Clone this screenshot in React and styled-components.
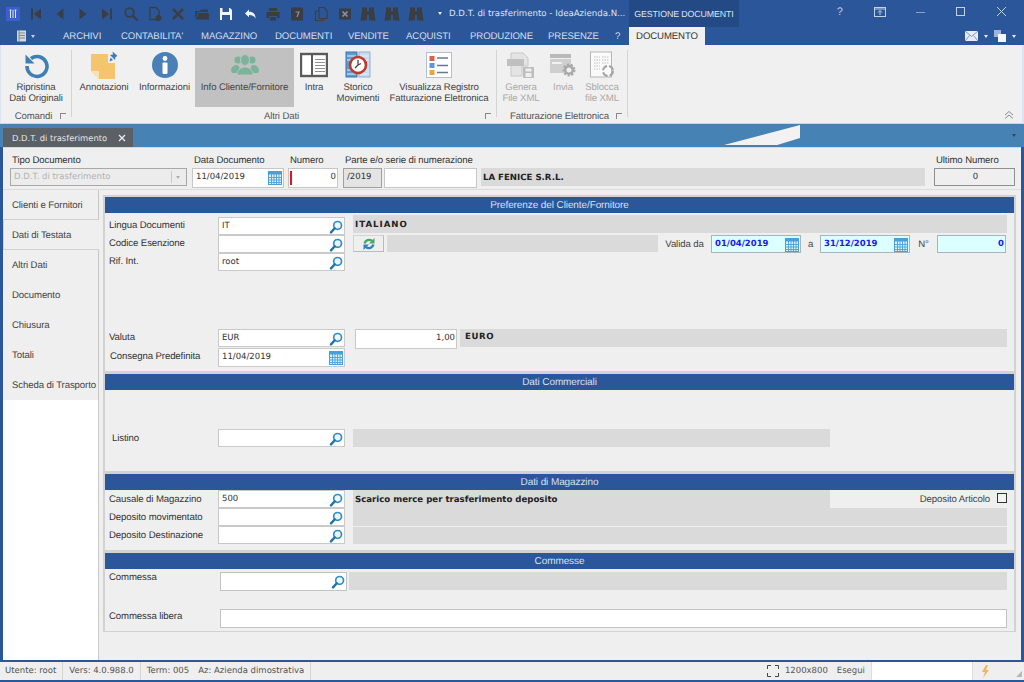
import React from "react";
import styled, { createGlobalStyle } from "styled-components";

const Global = createGlobalStyle`
  html, body { margin: 0; padding: 0; background: #2b579a; }
  * { box-sizing: border-box; }
`;
const SANS = `"Liberation Sans", Arial, sans-serif`;
const WIDE = `"DejaVu Sans", Verdana, sans-serif`;

const Window = styled.div`
  position: relative; width: 1024px; height: 682px; overflow: hidden; background: #2b579a;
  display: flex; flex-direction: column; font-family: ${SANS}; font-size: 9.6px; color: #333;
  text-rendering: geometricPrecision; letter-spacing: -0.1px;
`;
const TitleBar = styled.div`height: 27px; display: flex; align-items: stretch; flex: none;`;
const AppLogo = styled.div`
  width: 14px; height: 14px; margin: 7px 4px 0 6px; background: #3c5fd0; display: flex; align-items: center; justify-content: center; flex: none;
`;
const Quick = styled.div`display: flex; width: 413px; flex: none; align-items: center;`;
const QuickBtn = styled.div`width: 23.75px; display: flex; justify-content: center; flex: none;`;
const Title = styled.div`
  flex: none; width: 192px; display: flex; align-items: center; gap: 7px; color: #dfe6f2; font-family: ${WIDE}; font-size: 8.6px; white-space: nowrap; padding-left: 1px; letter-spacing: 0;
`;
const Caret = styled.span`
  display: block; width: 0; height: 0; border-left: 2.5px solid transparent; border-right: 2.5px solid transparent;
  border-top: 3px solid ${p => p.$c || "#e8edf5"};
`;
const ContextTab = styled.div`
  width: 110px; flex: none; background: #234a84; color: #dfe6f2; display: flex; align-items: center; justify-content: center; white-space: nowrap; font-size: 8.8px;
`;
const Controls = styled.div`flex: 1; display: flex; align-items: center; justify-content: flex-end; padding: 0 2px 4px 0;`;
const Ctl = styled.div`width: 40.5px; display: flex; justify-content: center; color: #c4d0e4; font-size: 11px;`;

const MenuBar = styled.div`height: 18px; display: flex; align-items: stretch; flex: none; color: #d5deec; position: relative;`;
const MenuIcon = styled.div`width: 63px; display: flex; align-items: center; gap: 3px; padding-left: 16px; flex: none;`;
const MenuItem = styled.div`width: ${p => p.$w}px; line-height: 20px; white-space: nowrap; flex: none;`;
const MenuActive = styled.div`
  width: 76px; background: #f0f0f0; color: #333; text-align: center; line-height: 20px; flex: none;
`;
const MenuRight = styled.div`flex: 1; display: flex; align-items: center; justify-content: flex-end; gap: 6px; padding-right: 8px;`;

const Ribbon = styled.div`
  height: 79px; flex: none; background: #f0f0f0; display: flex; border-left: 1px solid #dce4ef; border-right: 2px solid #dce4ef; border-bottom: 1px solid #c7d6e6; position: relative;
`;
const Group = styled.div`
  width: ${p => p.$w}px; flex: none; display: flex; flex-direction: column; position: relative; padding-top: 3px;
  &::after { content: ""; position: absolute; right: 0; top: 5px; bottom: 6px; width: 1px; background: #d4d4d4; }
`;
const GroupBtns = styled.div`display: flex; height: 59px; padding-left: ${p => p.$pad || 0}px;`;
const GroupLabel = styled.div`
  text-align: center; line-height: 13px; margin-top: 3px; color: #555; position: relative; padding-right: 6px; white-space: nowrap;
`;
const Launcher = styled.span`
  position: absolute; right: 6px; top: 3px; width: 6px; height: 6px; border-left: 1px solid #888; border-top: 1px solid #888;
`;
const RibBtn = styled.div`
  width: ${p => p.$w}px; margin-right: ${p => p.$mr || 0}px; flex: none; display: flex; flex-direction: column; align-items: center;
  background: ${p => (p.$on ? "#c1c1c1" : "transparent")}; color: ${p => (p.$off ? "#a9a9a9" : "#444")};
`;
const RibIcon = styled.div`height: 31px; display: flex; align-items: center; justify-content: center; margin-top: 1px; flex: none;`;
const RibText = styled.div`text-align: center; line-height: 11px; white-space: pre; margin-top: 2px;`;
const Collapse = styled.div`position: absolute; right: 8px; bottom: 3px; color: #777;`;

const TabBand = styled.div`height: 23px; flex: none; background: #4682b4; position: relative; display: flex; align-items: flex-end; padding-left: 3px;`;
const DocTab = styled.div`
  width: 130px; height: 19px; background: #5b6066; color: #e6e6e6; display: flex; align-items: center; justify-content: space-between; padding: 0 7px 0 9px; font-family: ${WIDE}; font-size: 8.4px; letter-spacing: 0;
`;
const Wedge = styled.div`
  position: absolute; left: 724px; top: 1px; width: 76px; height: 20px; background: #f2f2f2;
  clip-path: polygon(0 100%, 100% 0, 100% 65%, 70% 100%);
`;
const BandCaret = styled.div`position: absolute; right: 8px; top: 10px;`;

const Frame = styled.div`
  flex: 1; min-height: 0; margin: 0 3px; background: #efefef; display: flex; flex-direction: column; border-top: 1px solid #d8d8d8;
`;
const Header = styled.div`
  height: 42px; flex: none; display: flex; align-items: flex-start; padding: 7px 0 0 7px; border-bottom: 1px solid #dcdcdc;
`;
const HField = styled.div`
  width: ${p => p.$w}px; margin-right: ${p => p.$mr || 0}px; flex: none; display: flex; flex-direction: column;
`;
const HLabel = styled.div`height: 13px; line-height: 12px; padding-left: 2px; color: #333; white-space: nowrap;`;
const HPair = styled.div`display: flex; gap: 2px;`;
const Box = styled.div`
  height: ${p => p.$h || 20}px; background: ${p => p.$bg || "#fff"}; border: 1px solid ${p => p.$bc || "#c6c6c6"};
  width: ${p => (p.$w ? p.$w + "px" : "auto")}; flex: ${p => (p.$w ? "none" : "1 1 auto")};
  display: flex; align-items: flex-start; position: relative; font-family: ${WIDE}; font-size: 8.5px; color: ${p => p.$fg || "#333"}; letter-spacing: 0;
  padding: 3px 1px 0 3px; white-space: nowrap;
  justify-content: ${p => (p.$right ? "flex-end" : "space-between")};
  margin-right: ${p => p.$mr || 0}px; margin-left: ${p => p.$ml || 0}px;
  & > svg { margin-top: -1px; }
`;
const SelectArrow = styled.div`
  position: absolute; right: 3px; top: 2px; bottom: 2px; width: 12px; border-left: 1px solid #c8c8c8; display: flex; align-items: center; justify-content: center;
`;
const RedMark = styled.span`position: absolute; left: 1px; top: 2px; bottom: 2px; width: 2px; background: #e1141c;`;
const Gray = styled.div`
  width: ${p => (p.$w ? p.$w + "px" : "auto")}; flex: ${p => (p.$w ? "none" : "1 1 auto")}; height: ${p => p.$h || 18}px; background: #dadada;
  margin-top: ${p => p.$mt || 0}px; margin-right: ${p => p.$mr || 0}px; margin-left: ${p => p.$ml || 0}px;
  padding: ${p => p.$pt ?? 4}px 2px 0 ${p => p.$pl ?? 2}px;
  font-family: ${WIDE}; font-size: 8.6px; font-weight: 700; color: #222; white-space: nowrap; line-height: 12px; letter-spacing: ${p => p.$ls || 0}px;
`;

const Content = styled.div`flex: 1; min-height: 0; display: flex;`;
const Sidebar = styled.div`width: 96px; flex: none; background: #fff; border-right: 1px solid #c8c8c8; display: flex; flex-direction: column;`;
const SideTab = styled.div`
  height: 30px; flex: none; background: #efefef; padding: 2px 0 0 8px; display: flex; align-items: center; color: #444; white-space: nowrap; margin-right: ${p => (p.$on ? -1 : 0)}px;
  border-left: 1px solid ${p => (p.$on ? "#d0d0d0" : "#efefef")}; z-index: ${p => (p.$on ? 1 : 0)};
  border-bottom: 1px solid ${p => (p.$on || p.$above ? "#d0d0d0" : "#efefef")};
`;
const Main = styled.div`flex: 1; min-width: 0; padding: 5px 5px 0 4px; display: flex; flex-direction: column;`;
const Section = styled.section`
  height: ${p => p.$h}px; flex: none; border: 2px solid #d2d2d2; border-bottom-width: 1px; display: flex; flex-direction: column;
`;
const SectionHead = styled.div`
  height: 16px; flex: none; background: #2b579a; color: #d7e0ee; text-align: center; line-height: 17px; font-size: 10px;
`;
const SectionBody = styled.div`padding: ${p => p.$top || 0}px 7px 0 4px; display: flex; flex-direction: column;`;
const Row = styled.div`display: flex; align-items: flex-start; height: ${p => p.$h || 18}px; margin-top: ${p => p.$mt || 0}px; flex: none;`;
const Label = styled.div`
  width: ${p => p.$w || 109}px; flex: none; padding-left: ${p => p.$in || 0}px; line-height: 12px; padding-top: ${p => p.$pt ?? 3}px; color: #333; white-space: nowrap;
`;
const InlineLabel = styled.div`
  width: ${p => p.$w}px; flex: none; line-height: 12px; padding-top: 4px; color: #444; white-space: nowrap; text-align: ${p => p.$align || "left"};
`;
const RefreshBtn = styled.div`
  width: 31px; height: 17px; flex: none; margin: 0 3px 0 8px; background: #efefef; border: 1px solid #d4d4d4; border-right-color: #bbb; border-bottom-color: #bbb; display: flex; align-items: center; justify-content: center;
`;
const Check = styled.div`width: 10px; height: 10px; flex: none; border: 1px solid #333; background: #f4f4f4; margin: 3px 0 0 7px;`;

const StatusBar = styled.div`
  height: 18px; flex: none; margin: 2px 0 2px 0; background: #efefef; display: flex; align-items: stretch; color: #555; font-family: ${WIDE}; font-size: 8.5px; letter-spacing: 0;
`;
const Cell = styled.div`
  padding: 0 ${p => p.$pr ?? 6}px 0 ${p => p.$pl ?? 6}px; display: flex; align-items: center; white-space: nowrap; gap: 9px; flex: none;
  border-right: ${p => (p.$plain ? "0" : "1px solid #d5d5d5")};
`;
const Spring = styled.div`flex: 1;`;
const StatusInput = styled.div`width: 101px; flex: none; background: #fff; margin-left: 3px; border-left: 1px solid #ddd;`;
const Bolt = styled.div`width: 52px; flex: none; display: flex; align-items: center; padding-left: 8px; position: relative; border-left: 1px solid #ddd;`;
const Grip = styled.div`
  position: absolute; right: 2px; bottom: 3px; width: 6px; height: 6px;
  background: radial-gradient(circle, #777 0.6px, transparent 0.8px) 0 0 / 2px 2px;
  clip-path: polygon(100% 0, 100% 100%, 0 100%);
`;

const dk = "#3a3d44";
const I = ({ s = 16, w, h, children, vb }) => (
  <svg width={w || s} height={h || s} viewBox={vb || `0 0 ${s} ${s}`} style={{ display: "block", flex: "none" }}>{children}</svg>
);

const Search = () => (
  <I s={14}>
    <circle cx="8.6" cy="5.4" r="3.9" fill="#eef6fb" stroke="#2f8ec7" strokeWidth="1.7" />
    <path d="M5.8 8.3 2 12.4" stroke="#1f74a8" strokeWidth="2.4" strokeLinecap="round" />
  </I>
);
const Cal = () => (
  <I s={14}>
    <rect x="0.5" y="0.5" width="13" height="13" fill="#dff0fb" stroke="#4aa0d6" />
    <rect x="0.5" y="0.5" width="13" height="3" fill="#4aa0d6" />
    <path d="M0.5 6.5h13M0.5 9h13M0.5 11.5h13M3.5 3v10M6 3v10M8.5 3v10M11 3v10" stroke="#4aa0d6" strokeWidth="0.9" fill="none" />
  </I>
);
const Refresh = () => (
  <I s={14}>
    <path d="M2.6 6.500A4.600 4.600 0 0 1 10 3.900" fill="none" stroke="#45a866" strokeWidth="2.400" />
    <path d="M12.500 1v5.500H7z" fill="#45a866" />
    <path d="M11.400 7.500A4.600 4.600 0 0 1 4 10.100" fill="none" stroke="#2f7fc4" strokeWidth="2.400" />
    <path d="M1.500 13V7.500H7z" fill="#2f7fc4" />
  </I>
);

const quickIcons = [
  <I key="0"><path d="M3 2.5h2v11H3zM13 2.5v11L6 8z" fill={dk} /></I>,
  <I key="1"><path d="M11.5 2.5v11L4.5 8z" fill={dk} /></I>,
  <I key="2"><path d="M4.5 2.5v11l7-5.5z" fill={dk} /></I>,
  <I key="3"><path d="M11 2.5h2v11h-2zM3 2.5v11L10 8z" fill={dk} /></I>,
  <I key="4"><circle cx="6.5" cy="6.5" r="4.3" fill="none" stroke={dk} strokeWidth="1.8" /><path d="m10 10 4.5 4.5" stroke={dk} strokeWidth="2.4" /></I>,
  <I key="5"><path d="M3 1.5h6l3 3v9H3z" fill="none" stroke={dk} strokeWidth="1.3" /><circle cx="11.5" cy="12" r="3" fill={dk} /></I>,
  <I key="6"><path d="m3 3 10 10M13 3 3 13" stroke={dk} strokeWidth="2.6" /></I>,
  <I key="7"><path d="M1 5h5l1-1.5h7V6H4l-3 7zM2 13.5l2.5-6.5H15v6.5z" fill={dk} /></I>,
  <I key="8"><path d="M2 2h10l2 2v10H2z" fill="#f4f6fa" /><path d="M4.5 2h6.5v4H4.5z" fill="#2b579a" /><path d="M4 9h8v5H4z" fill="#2b579a" /></I>,
  <I key="9"><path d="M3 7.5 7 3.5v2.3c4.5 0 6.5 2 6.5 7-1-2.6-3-3.7-6.5-3.7v2.2z" fill="#f2f5fa" /></I>,
  <I key="10"><path d="M4 2h8v3H4zM1.5 6h13v6H12v-2H4v2H1.5zM5 11h6v3.5H5z" fill={dk} /></I>,
  <I key="11"><rect x="2" y="1.5" width="12" height="13" rx="1" fill={dk} /><path d="M6.5 6h3.5l-2 5" stroke="#8a93a3" strokeWidth="1.2" fill="none" /></I>,
  <I key="12"><path d="M6 1.5h5l3 3v8H6zM2.5 5H6M2.5 5v9.5H10v-2" fill="none" stroke={dk} strokeWidth="1.1" /></I>,
  <I key="13"><rect x="2" y="2.5" width="12" height="11" fill={dk} /><path d="m5.5 5.5 5 5m0-5-5 5" stroke="#8a93a3" strokeWidth="1.6" /></I>,
  ...[14, 15, 16].map(k => (
    <I key={k}><path d="M2 1.500h5v4h2v-4h5v4l1.500 9H9V9H7v5.500H.5l1.500-9z" fill={dk} /></I>
  )),
];

const IconRestore = () => (
  <I s={28}>
    <path d="M9 7.500A10 10 0 1 1 5 15" fill="none" stroke="#3f7fb5" strokeWidth="3.6" />
    <path d="M3.500 3.500v9h9z" fill="#3f7fb5" />
  </I>
);
const IconNote = () => (
  <I w={28} h={28} vb="0 0 28 28">
    <path d="M1 3h24v25H9l-8-8z" fill="#f4c56d" />
    <path d="M1 20h8v8z" fill="#f9e2b2" />
    <path d="M18 2h10v10H18z" fill="#f0f0f0" />
    <path d="M22.500 0.500 27.500 5l-2 1-.5 3-5-5 3-.5zM20.500 6.500l2.500 2.500-3.500 1.500z" fill="#3f79b8" />
  </I>
);
const IconInfo = () => (
  <I s={28}>
    <circle cx="14" cy="14" r="13" fill="#4a80b7" />
    <circle cx="14" cy="7.500" r="2.400" fill="#fff" />
    <rect x="11.500" y="11.500" width="5" height="11.500" rx="1" fill="#fff" />
  </I>
);
const IconPeople = () => (
  <I s={28}>
    <g fill="#7bb39c">
      <circle cx="7" cy="9" r="3.600" />
      <circle cx="21" cy="9" r="3.600" />
      <path d="M0 20c0-4 3-6 6-6l2 1 1 7H1zM28 20c0-4-3-6-6-6l-2 1-1 7h8z" />
    </g>
    <ellipse cx="14" cy="9" rx="4.400" ry="5.500" fill="#7bb39c" stroke="#c1c1c1" strokeWidth="1" />
    <path d="M6 24c0-5 4-8 8-8s8 3 8 8z" fill="#7bb39c" stroke="#c1c1c1" strokeWidth="1" />
  </I>
);
const IconIntra = () => (
  <I s={28}>
    <rect x="1" y="3" width="26" height="22" fill="#fff" stroke="#5a5a5a" strokeWidth="2.400" />
    <rect x="11" y="3" width="2" height="22" fill="#5a5a5a" />
    <path d="M15 8.500h10M15 11.500h10M15 14.500h10M15 17.500h10M15 20.500h10" stroke="#8f8f8f" strokeWidth="1.200" />
  </I>
);
const IconStorico = () => (
  <I s={28}>
    <rect x="2" y="1" width="11" height="25" fill="#5c9bd2" stroke="#3e72a8" />
    <rect x="15" y="1" width="11" height="25" fill="#c6dcf0" stroke="#8fb0d0" />
    <path d="M3 5h9M3 9h9M3 19h9M3 23h9M16 5h9M16 9h9M16 19h9M16 23h9" stroke="#e5eff8" />
    <circle cx="14" cy="14" r="8" fill="#fff" stroke="#c0392b" strokeWidth="2.600" />
    <path d="M14 9v5l-3 3M14 14l3-1.500" stroke="#444" strokeWidth="1.300" fill="none" />
  </I>
);
const IconList = () => (
  <I s={28}>
    <rect x="1.500" y="1.500" width="25" height="25" fill="#fff" stroke="#b3bfd3" />
    <rect x="4.500" y="5" width="5" height="5" fill="#d9604c" />
    <rect x="4.500" y="12" width="5" height="5" fill="#5b9ad6" />
    <rect x="4.500" y="19" width="5" height="5" fill="#eea23c" />
    <path d="M12 7h11M12 14.500h11M12 21.500h11" stroke="#6a7a90" strokeWidth="1.300" />
  </I>
);
const IconGenera = () => (
  <I s={28}>
    <path d="M4 2h12l5 5v8h-6v10H4z" fill="#e4e4e4" stroke="#c8c8c8" />
    <rect x="0" y="8" width="17" height="7" fill="#c0c0c0" />
    <rect x="16" y="16" width="11" height="11" fill="#bdbdbd" />
    <rect x="18.500" y="17.500" width="6" height="3" fill="#efefef" />
    <rect x="18.500" y="22" width="6" height="4" fill="#efefef" />
  </I>
);
const IconInvia = () => (
  <I s={28}>
    <rect x="1" y="3" width="21" height="4" fill="#b9b9b9" />
    <rect x="1" y="8" width="21" height="14" fill="#cfcfcf" />
    <rect x="3" y="11" width="10" height="2" fill="#f0f0f0" />
    <circle cx="20" cy="19" r="5" fill="#a9a9a9" stroke="#a9a9a9" strokeWidth="3" strokeDasharray="2 1.500" />
    <circle cx="20" cy="19" r="2.500" fill="#f0f0f0" />
  </I>
);
const IconSblocca = () => (
  <I s={28}>
    <rect x="2.500" y="1" width="21" height="25" fill="#fafafa" stroke="#b5b5b5" />
    <path d="M6 6h6M6 9h6M6 12h6M6 15h6M6 18h6M14 6h7M14 9h7M14 12h7" stroke="#c0c0c0" strokeDasharray="1.500 1" />
    <circle cx="20" cy="20" r="5" fill="none" stroke="#a5a5a5" strokeWidth="2" strokeDasharray="6 2" />
  </I>
);

const Lookup = ({ value, ml = 0, fg }) => (
  <Box $w={127} $h={18} $bc="#c9c9c9" $ml={ml} $fg={fg}>
    <span>{value}</span>
    <Search />
  </Box>
);

export default function App() {
  return (
    <Window>
      <Global />
      <TitleBar>
        <AppLogo>
          <I s={10}><path d="M2.500 1v8M5 1v8M7.500 1v8" stroke="#dfe6fa" strokeWidth="1" /><path d="M1.500 1h2M6.500 1h2" stroke="#dfe6fa" /></I>
        </AppLogo>
        <Quick>
          {quickIcons.map((ic, i) => <QuickBtn key={i}>{ic}</QuickBtn>)}
        </Quick>
        <Title><Caret /><span>D.D.T. di trasferimento - IdeaAzienda.N...</span></Title>
        <ContextTab>GESTIONE DOCUMENTI</ContextTab>
        <Controls>
          <Ctl>?</Ctl>
          <Ctl><I s={12}><rect x="0.500" y="1.500" width="11" height="9" fill="none" stroke="#c4d0e4" /><path d="M0.500 3h11M6 9V5M4 6.500 6 4.500l2 2" stroke="#c4d0e4" fill="none" /></I></Ctl>
          <Ctl><I s={12}><path d="M1 6.500h9" stroke="#8ea4c7" /></I></Ctl>
          <Ctl><I s={12}><rect x="1.500" y="1.500" width="8" height="8" fill="none" stroke="#c4d0e4" /></I></Ctl>
          <Ctl><I s={12}><path d="m1 1 9 9m0-9-9 9" stroke="#c4d0e4" /></I></Ctl>
        </Controls>
      </TitleBar>

      <MenuBar>
        <MenuIcon>
          <I s={12}><rect x="1" y="0.500" width="9" height="11" fill="#d8d8d8" /><path d="M3 3h6M3 5.500h6M3 8h6" stroke="#7c8594" /><path d="M3 .5v11" stroke="#7c8594" /></I>
          <Caret $c="#c8d2e2" />
        </MenuIcon>
        <MenuItem $w={58}>ARCHIVI</MenuItem>
        <MenuItem $w={80}>CONTABILITA'</MenuItem>
        <MenuItem $w={74}>MAGAZZINO</MenuItem>
        <MenuItem $w={73}>DOCUMENTI</MenuItem>
        <MenuItem $w={58}>VENDITE</MenuItem>
        <MenuItem $w={64}>ACQUISTI</MenuItem>
        <MenuItem $w={78}>PRODUZIONE</MenuItem>
        <MenuItem $w={67}>PRESENZE</MenuItem>
        <MenuItem $w={14}>?</MenuItem>
        <MenuActive>DOCUMENTO</MenuActive>
        <MenuRight>
          <I w={13} h={10} vb="0 0 13 10"><rect width="13" height="10" fill="#e8eef7" /><path d="m0 0 6.500 5.500L13 0M0 10l4.500-5.500M13 10 8.500 4.500" stroke="#7d97bd" fill="none" /></I>
          <Caret $c="#e8edf5" />
          <I s={12}><rect x="0" y="0" width="7" height="7" fill="#9fb4d4" /><rect x="4" y="4" width="8" height="8" fill="#f4f6fa" /></I>
          <Caret $c="#e8edf5" />
        </MenuRight>
      </MenuBar>

      <Ribbon>
        <Group $w={71}>
          <GroupBtns>
            <RibBtn $w={70}>
              <RibIcon><IconRestore /></RibIcon>
              <RibText>{"Ripristina\nDati Originali"}</RibText>
            </RibBtn>
          </GroupBtns>
          <GroupLabel>Comandi<Launcher /></GroupLabel>
        </Group>
        <Group $w={425}>
          <GroupBtns $pad={4}>
            <RibBtn $w={56} $mr={3}><RibIcon><IconNote /></RibIcon><RibText>Annotazioni</RibText></RibBtn>
            <RibBtn $w={59} $mr={1}><RibIcon><IconInfo /></RibIcon><RibText>Informazioni</RibText></RibBtn>
            <RibBtn $w={99} $mr={2} $on><RibIcon><IconPeople /></RibIcon><RibText>Info Cliente/Fornitore</RibText></RibBtn>
            <RibBtn $w={36} $mr={2}><RibIcon><IconIntra /></RibIcon><RibText>Intra</RibText></RibBtn>
            <RibBtn $w={48} $mr={5}><RibIcon><IconStorico /></RibIcon><RibText>{"Storico\nMovimenti"}</RibText></RibBtn>
            <RibBtn $w={104}><RibIcon><IconList /></RibIcon><RibText>{"Visualizza Registro\nFatturazione Elettronica"}</RibText></RibBtn>
          </GroupBtns>
          <GroupLabel>Altri Dati<Launcher /></GroupLabel>
        </Group>
        <Group $w={131}>
          <GroupBtns $pad={4}>
            <RibBtn $w={40} $mr={4} $off><RibIcon><IconGenera /></RibIcon><RibText>{"Genera\nFile XML"}</RibText></RibBtn>
            <RibBtn $w={36} $mr={2} $off><RibIcon><IconInvia /></RibIcon><RibText>Invia</RibText></RibBtn>
            <RibBtn $w={38} $off><RibIcon><IconSblocca /></RibIcon><RibText>{"Sblocca\nfile XML"}</RibText></RibBtn>
          </GroupBtns>
          <GroupLabel>Fatturazione Elettronica<Launcher /></GroupLabel>
        </Group>
        <Collapse>
          <I s={10}><path d="m1 5 4-3.500L9 5M1 8.500l4-3.500 4 3.500" fill="none" stroke="#8a8a8a" /></I>
        </Collapse>
      </Ribbon>

      <TabBand>
        <DocTab>
          <span>D.D.T. di trasferimento</span>
          <I s={8}><path d="m1 1 6 6m0-6-6 6" stroke="#eee" strokeWidth="1.300" /></I>
        </DocTab>
        <Wedge />
        <BandCaret><Caret $c="#444" /></BandCaret>
      </TabBand>

      <Frame>
        <Header>
          <HField $w={177} $mr={5}>
            <HLabel>Tipo Documento</HLabel>
            <Box $h={18} $bg="#ececec" $bc="#a8a8a8" $fg="#b2b2b2">
              <span>D.D.T. di trasferimento</span>
              <SelectArrow><Caret $c="#b0b0b0" /></SelectArrow>
            </Box>
          </HField>
          <HField $w={92} $mr={4}>
            <HLabel>Data Documento</HLabel>
            <Box><span>11/04/2019</span><Cal /></Box>
          </HField>
          <HField $w={50} $mr={5}>
            <HLabel>Numero</HLabel>
            <Box $right><RedMark /><span>0</span></Box>
          </HField>
          <HField $w={134} $mr={4}>
            <HLabel>Parte e/o serie di numerazione</HLabel>
            <HPair>
              <Box $w={39} $bg="#e4e4e4" $bc="#a0a0a0"><span>/2019</span></Box>
              <Box $w={93} />
            </HPair>
          </HField>
          <HField $w={444} $mr={9}>
            <HLabel />
            <Gray $h={18}>LA FENICE S.R.L.</Gray>
          </HField>
          <HField $w={81}>
            <HLabel>Ultimo Numero</HLabel>
            <Box $h={18} $bg="#efefef" $bc="#8f8f8f"><span style={{ margin: "0 auto" }}>0</span></Box>
          </HField>
        </Header>

        <Content>
          <Sidebar>
            <SideTab $above>Clienti e Fornitori</SideTab>
            <SideTab $on>Dati di Testata</SideTab>
            <SideTab>Altri Dati</SideTab>
            <SideTab>Documento</SideTab>
            <SideTab>Chiusura</SideTab>
            <SideTab>Totali</SideTab>
            <SideTab>Scheda di Trasporto</SideTab>
          </Sidebar>
          <Main>
            <Section $h={177}>
              <SectionHead>Preferenze del Cliente/Fornitore</SectionHead>
              <SectionBody $top={4}>
                <Row>
                  <Label>Lingua Documenti</Label>
                  <Lookup value="IT" />
                  <Gray $ml={8} $mt={-2} $ls={1}>ITALIANO</Gray>
                </Row>
                <Row>
                  <Label>Codice Esenzione</Label>
                  <Lookup />
                  <RefreshBtn><Refresh /></RefreshBtn>
                  <Gray $w={271} $h={17} />
                  <InlineLabel $w={53} $align="center">Valida da</InlineLabel>
                  <Box $w={90} $h={18} $bg="#dcffff" $bc="#aab4b8" $fg="#1a1af0">
                    <strong>01/04/2019</strong><Cal />
                  </Box>
                  <InlineLabel $w={19} $align="center">a</InlineLabel>
                  <Box $w={90} $h={18} $bg="#dcffff" $bc="#aab4b8" $fg="#1a1af0">
                    <strong>31/12/2019</strong><Cal />
                  </Box>
                  <InlineLabel $w={27} $align="center">N°</InlineLabel>
                  <Box $w={69} $h={18} $bg="#dcffff" $bc="#aab4b8" $fg="#1a1af0" $right>
                    <strong>0</strong>
                  </Box>
                </Row>
                <Row>
                  <Label>Rif. Int.</Label>
                  <Lookup value="root" />
                </Row>
                <Row $mt={58} $h={19}>
                  <Label>Valuta</Label>
                  <Lookup value="EUR" />
                  <Box $w={102} $ml={10} $mr={3} $right $bc="#c9c9c9"><span>1,00</span></Box>
                  <Gray $pt={2} $pl={5} $ls={0.6}>EURO</Gray>
                </Row>
                <Row $h={19}>
                  <Label $in={1}>Consegna Predefinita</Label>
                  <Box $w={127} $h={19} $bc="#c9c9c9"><span>11/04/2019</span><Cal /></Box>
                </Row>
              </SectionBody>
            </Section>

            <Section $h={100}>
              <SectionHead>Dati Commerciali</SectionHead>
              <SectionBody $top={39}>
                <Row $h={19}>
                  <Label $in={3} $pt={4}>Listino</Label>
                  <Lookup />
                  <Gray $w={477} $ml={8}></Gray>
                </Row>
              </SectionBody>
            </Section>

            <Section $h={79}>
              <SectionHead>Dati di Magazzino</SectionHead>
              <SectionBody $top={0}>
                <Row $h={18}>
                  <Label $pt={4}>Causale di Magazzino</Label>
                  <Lookup value="500" />
                  <Gray $w={477} $ml={8} $h={18}>Scarico merce per trasferimento deposito</Gray>
                  <InlineLabel $w={160} $align="right">Deposito Articolo</InlineLabel>
                  <Check />
                </Row>
                <Row $h={18}>
                  <Label $pt={4}>Deposito movimentato</Label>
                  <Lookup />
                  <Gray $ml={8} />
                </Row>
                <Row $h={19}>
                  <Label $pt={4}>Deposito Destinazione</Label>
                  <Lookup />
                  <Gray $ml={8} $mt={1} $h={17} />
                </Row>
              </SectionBody>
            </Section>

            <Section $h={81}>
              <SectionHead>Commesse</SectionHead>
              <SectionBody $top={3}>
                <Row $h={19}>
                  <Label $w={111} $pt={0}>Commessa</Label>
                  <Box $w={127} $h={19} $bc="#c2c2c2"><span /><Search /></Box>
                  <Gray $ml={2} />
                </Row>
                <Row $mt={18} $h={19}>
                  <Label $w={111} $pt={2}>Commessa libera</Label>
                  <Box $h={19} $bc="#c2c2c2" />
                </Row>
              </SectionBody>
            </Section>
          </Main>
        </Content>
      </Frame>

      <StatusBar>
        <Cell $pl={5}>Utente: root</Cell>
        <Cell>Vers: 4.0.988.0</Cell>
        <Cell>Term: 005<span>Az: Azienda dimostrativa</span></Cell>
        <Spring />
        <Cell $plain $pr={0} $pl={0}>
          <I s={12}><path d="M.5 4V.5H4M8 .5h3.500V4M11.500 8v3.500H8M4 11.500H.5V8" fill="none" stroke="#444" /></I>
        </Cell>
        <Cell $plain $pl={6} $pr={3}>1200x800<span>Esegui</span></Cell>
        <StatusInput />
        <Bolt>
          <I w={9} h={13} vb="0 0 9 13"><path d="M5 0 1 7h3l-2 6 6-8H5l2-5z" fill="#f1b65a" /></I>
          <Grip />
        </Bolt>
      </StatusBar>
    </Window>
  );
}
